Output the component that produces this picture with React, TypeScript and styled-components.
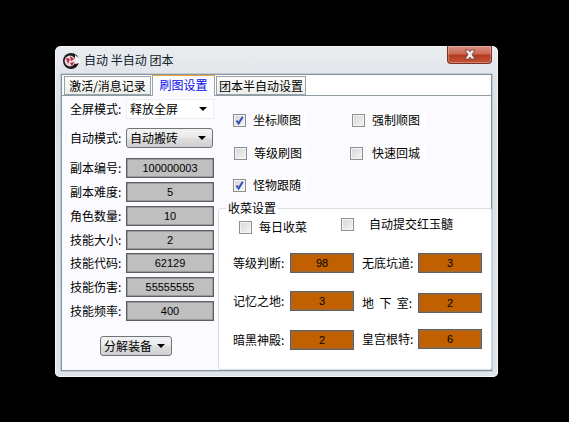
import React, {FC} from 'react';
import styled, {createGlobalStyle} from 'styled-components';

const GlobalStyle = createGlobalStyle`
    html, body {
        margin: 0;
        padding: 0;
        background: #000;
    }
    body {
        width: 569px;
        height: 422px;
        overflow: hidden;
        font-family: "Noto Sans CJK SC", "Liberation Sans", sans-serif;
        font-size: 12px;
        color: #000;
    }
`;

const Frame = styled.div`
    width: 443px;
    height: 331px;
    margin: 46px 0 0 55px;
    padding: 0 6px 6px 6px;
    box-sizing: border-box;
    display: flex;
    flex-direction: column;
    border-radius: 6px 6px 5px 5px;
    background: linear-gradient(#e9ecef, #d9dfe5 60px, #e0e5ea);
    box-shadow: inset 0 0 0 1px #f4f6f8;
`;
const TitleBar = styled.div`
    height: 28px;
    flex: none;
    display: flex;
    align-items: flex-start;
`;
const AppIcon = styled.svg`
    width: 19px;
    height: 19px;
    margin: 5px 3px 0 1px;
`;
const Title = styled.span`
    font-size: 12px;
    line-height: 16px;
    margin-top: 6px;
    color: #10202c;
`;
const CloseButton = styled.div`
    width: 45px;
    height: 18px;
    margin-left: auto;
    box-sizing: border-box;
    display: flex;
    align-items: center;
    justify-content: center;
    border: 1px solid #7c3426;
    border-top: 0;
    border-radius: 0 0 4px 4px;
    background: linear-gradient(#d98f80, #cb6a56 45%, #b23a1f 55%, #c4563c);
    box-shadow: inset 0 0 0 1px rgba(255, 255, 255, 0.25);
`;
const Client = styled.div`
    flex: 1;
    display: flex;
    flex-direction: column;
    border: 1px solid #87949c;
    box-shadow: 0 0 0 0.5px #a7b2b9;
    background: #fbfbff;
`;
const TabStrip = styled.div`
    height: 20px;
    flex: none;
    padding-left: 2px;
    display: flex;
    align-items: flex-end;
    gap: 1px;
    background: #fff;
    border-bottom: 1px solid #8f9ba2;
`;
const Tab = styled.div<{$active?: boolean; $width: number}>`
    width: ${p => p.$width}px;
    height: ${p => (p.$active ? 21 : 19)}px;
    margin-bottom: ${p => (p.$active ? -1 : 0)}px;
    box-sizing: border-box;
    text-align: center;
    line-height: 18px;
    white-space: nowrap;
    color: ${p => (p.$active ? '#0b0bf0' : '#000')};
    background: ${p => (p.$active ? '#fbfbff' : 'linear-gradient(#fdfdfb, #edeee9)')};
    border: 1px solid #98a4aa;
    border-bottom: ${p => (p.$active ? 0 : 1)}px solid #98a4aa;
    border-top: 1px solid ${p => (p.$active ? '#e8a93c' : '#98a4aa')};
`;
const Body = styled.div`
    flex: 1;
    display: flex;
    min-height: 0;
`;
const LeftColumn = styled.div`
    width: 156px;
    flex: none;
    padding: 3px 0 0 8px;
    box-sizing: border-box;
    display: flex;
    flex-direction: column;
`;
const RightColumn = styled.div`
    flex: 1;
    display: flex;
    flex-direction: column;
`;
const FormRow = styled.div<{$top?: number}>`
    display: flex;
    align-items: center;
    height: 20px;
    margin-top: ${p => p.$top ?? 4}px;
`;
const RowLabel = styled.span<{$width?: number}>`
    width: ${p => p.$width ?? 56}px;
    flex: none;
    white-space: pre;
    line-height: 20px;
`;
const Value = styled.div<{$orange?: boolean; $width?: number}>`
    width: ${p => p.$width ?? 88}px;
    height: 20px;
    flex: none;
    box-sizing: border-box;
    border: 1px solid #5f5f5f;
    box-shadow: inset 0 0 0 0.5px #777;
    background: ${p => (p.$orange ? '#c06000' : '#bfbfbf')};
    text-align: center;
    font-family: "Liberation Sans", sans-serif;
    font-size: 11px;
    line-height: 18px;
`;
const PlainSelect = styled.div`
    width: 88px;
    height: 20px;
    flex: none;
    padding: 0 6px 0 3px;
    box-sizing: border-box;
    display: flex;
    align-items: center;
    justify-content: space-between;
    background: #fff;
    border: 1px solid #eceef0;
    line-height: 18px;
`;
const ButtonSelect = styled.div<{$width: number}>`
    width: ${p => p.$width}px;
    height: 20px;
    flex: none;
    padding: 0 6px 0 3px;
    box-sizing: border-box;
    display: flex;
    align-items: center;
    justify-content: space-between;
    border: 1px solid #70757a;
    border-radius: 3px;
    background: linear-gradient(#f2f2f2, #ebebeb 45%, #dcdcdc 55%, #cfcfcf);
    line-height: 18px;
`;
const Arrow = styled.span`
    width: 0;
    height: 0;
    border-left: 4px solid transparent;
    border-right: 4px solid transparent;
    border-top: 4px solid #000;
`;
const BottomAction = styled.div`
    margin: 15px 0 0 30px;
`;
const OptionsArea = styled.div`
    height: 104px;
    flex: none;
    padding: 17px 0 0 15px;
    box-sizing: border-box;
    display: flex;
    flex-direction: column;
`;
const OptionRow = styled.div<{$height: number}>`
    height: ${p => p.$height}px;
    display: flex;
    align-items: flex-start;
`;
const OptionCell = styled.label<{$width?: number; $shift?: number; $gap?: number; $top?: number}>`
    width: ${p => (p.$width ? `${p.$width}px` : 'auto')};
    margin-left: ${p => p.$shift ?? 0}px;
    margin-top: ${p => p.$top ?? 0}px;
    display: flex;
    align-items: center;
    gap: ${p => p.$gap ?? 7}px;
    height: 14px;
`;
const CheckBox = styled.span`
    width: 13px;
    height: 13px;
    flex: none;
    box-sizing: border-box;
    display: flex;
    align-items: center;
    justify-content: center;
    border: 1px solid #8e8f8f;
    background: linear-gradient(135deg, #d6d6d6, #f4f4f4);
    box-shadow: inset 0 0 0 1px #f4f4f4;
`;
const OptionText = styled.span`
    background: #fff;
    line-height: 14px;
    padding-right: 6px;
    white-space: nowrap;
`;
const Group = styled.fieldset`
    flex: 1;
    min-width: 0;
    margin: 0;
    padding: 0;
    border: 1px solid #d5dfe5;
    border-radius: 3px;
    background: #fff;
    display: flex;
    flex-direction: column;
`;
const GroupTitle = styled.legend`
    margin-left: 7px;
    padding: 0 2px;
    line-height: 16px;
`;
const GroupChecks = styled.div`
    display: flex;
    align-items: flex-start;
    padding: 1px 0 0 20px;
    height: 37px;
    box-sizing: border-box;
`;
const Fields = styled.div`
    display: flex;
    padding-left: 14px;
`;
const FieldColumn = styled.div`
    width: 129px;
    flex: none;
    display: flex;
    flex-direction: column;
`;

const Checked: FC = () => (
    <svg width="11" height="11" viewBox="0 0 11 11">
        <path d="M2.5 5.5 L4.6 8.4 L8.8 1.8" fill="none" stroke="#3350b4" strokeWidth="2" />
    </svg>
);

const Option: FC<{
    text: string;
    checked?: boolean;
    width?: number;
    shift?: number;
    gap?: number;
    top?: number;
}> = ({text, checked, width, shift, gap, top}) => (
    <OptionCell $width={width} $shift={shift} $gap={gap} $top={top}>
        <CheckBox>{checked && <Checked />}</CheckBox>
        <OptionText>{text}</OptionText>
    </OptionCell>
);

const leftRows = [
    {label: '副本编号:', value: '100000003', top: 10},
    {label: '副本难度:', value: '5', top: 4},
    {label: '角色数量:', value: '10', top: 4},
    {label: '技能大小:', value: '2', top: 4},
    {label: '技能代码:', value: '62129', top: 3},
    {label: '技能伤害:', value: '55555555', top: 4},
    {label: '技能频率:', value: '400', top: 4},
];

const fieldsLeft = [
    {label: '等级判断:', value: '98', top: 0},
    {label: '记忆之地:', value: '3', top: 18},
    {label: '暗黑神殿:', value: '2', top: 19},
];
const fieldsRight = [
    {label: '无底坑道:', value: '3', top: 0},
    {label: '地  下  室:', value: '2', top: 20},
    {label: '皇宫根特:', value: '6', top: 16},
];

export default function App() {
    return (
        <>
            <GlobalStyle />
            <Frame>
                <TitleBar>
                    <AppIcon viewBox="0 0 19 19">
                        <circle cx="9" cy="10" r="8" fill="#1d1a1c" />
                        <path d="M13 4 L18 8 L18 12 L13 13 Z" fill="#f4f4f4" />
                        <circle cx="8" cy="10" r="5.4" fill="#e8d8dc" />
                        <path d="M4 7 L8 8 L6 13 Z M8 5 L12 8 L9 10 Z M8 12 L12 11 L10 15 Z" fill="#c4203a" />
                    </AppIcon>
                    <Title>自动 半自动 团本</Title>
                    <CloseButton>
                        <svg width="16" height="11" viewBox="0 0 16 11">
                            <path
                                d="M3 1 L7 1 L8 3 L9 1 L13 1 L10 5.5 L13 10 L9 10 L8 8 L7 10 L3 10 L6 5.5 Z"
                                fill="#f2f2f2"
                                stroke="#6d3a30"
                                strokeWidth="0.8"
                            />
                        </svg>
                    </CloseButton>
                </TitleBar>
                <Client>
                    <TabStrip>
                        <Tab $width={87}>激活/消息记录</Tab>
                        <Tab $width={63} $active>刷图设置</Tab>
                        <Tab $width={90}>团本半自动设置</Tab>
                    </TabStrip>
                    <Body>
                        <LeftColumn>
                            <FormRow $top={0}>
                                <RowLabel>全屏模式:</RowLabel>
                                <PlainSelect>释放全屏<Arrow /></PlainSelect>
                            </FormRow>
                            <FormRow $top={9}>
                                <RowLabel>自动模式:</RowLabel>
                                <ButtonSelect $width={87}>自动搬砖<Arrow /></ButtonSelect>
                            </FormRow>
                            {leftRows.map(row => (
                                <FormRow key={row.label} $top={row.top}>
                                    <RowLabel>{row.label}</RowLabel>
                                    <Value>{row.value}</Value>
                                </FormRow>
                            ))}
                            <BottomAction>
                                <ButtonSelect $width={72}>分解装备<Arrow /></ButtonSelect>
                            </BottomAction>
                        </LeftColumn>
                        <RightColumn>
                            <OptionsArea>
                                <OptionRow $height={33}>
                                    <Option text="坐标顺图" checked width={119} />
                                    <Option text="强制顺图" />
                                </OptionRow>
                                <OptionRow $height={32}>
                                    <Option text="等级刷图" width={116} shift={1} />
                                    <Option text="快速回城" gap={9} />
                                </OptionRow>
                                <OptionRow $height={20}>
                                    <Option text="怪物跟随" checked />
                                </OptionRow>
                            </OptionsArea>
                            <Group>
                                <GroupTitle>收菜设置</GroupTitle>
                                <GroupChecks>
                                    <Option text="每日收菜" width={102} top={3} />
                                    <Option text="自动提交红玉髓" gap={15} />
                                </GroupChecks>
                                <Fields>
                                    <FieldColumn>
                                        {fieldsLeft.map(f => (
                                            <FormRow key={f.label} $top={f.top}>
                                                <RowLabel $width={57}>{f.label}</RowLabel>
                                                <Value $orange $width={64}>{f.value}</Value>
                                            </FormRow>
                                        ))}
                                    </FieldColumn>
                                    <FieldColumn>
                                        {fieldsRight.map(f => (
                                            <FormRow key={f.label} $top={f.top}>
                                                <RowLabel>{f.label}</RowLabel>
                                                <Value $orange $width={64}>{f.value}</Value>
                                            </FormRow>
                                        ))}
                                    </FieldColumn>
                                </Fields>
                            </Group>
                        </RightColumn>
                    </Body>
                </Client>
            </Frame>
        </>
    );
}
